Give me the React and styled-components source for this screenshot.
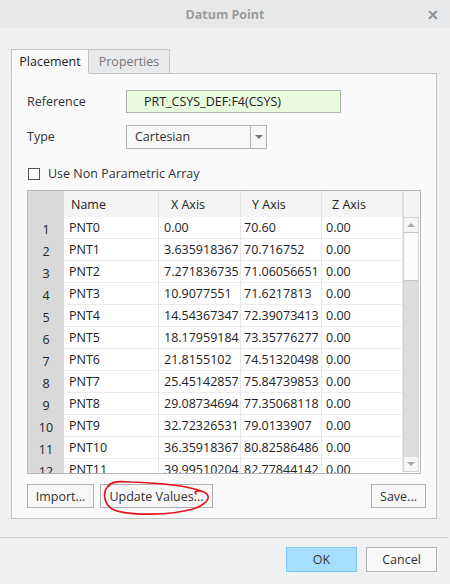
import React from 'react';
import styled, { createGlobalStyle } from 'styled-components';

const rows = [
  ['PNT0', '0.00', '70.60', '0.00'],
  ['PNT1', '3.635918367', '70.716752', '0.00'],
  ['PNT2', '7.271836735', '71.06056651', '0.00'],
  ['PNT3', '10.9077551', '71.6217813', '0.00'],
  ['PNT4', '14.54367347', '72.39073413', '0.00'],
  ['PNT5', '18.17959184', '73.35776277', '0.00'],
  ['PNT6', '21.8155102', '74.51320498', '0.00'],
  ['PNT7', '25.45142857', '75.84739853', '0.00'],
  ['PNT8', '29.08734694', '77.35068118', '0.00'],
  ['PNT9', '32.72326531', '79.0133907', '0.00'],
  ['PNT10', '36.35918367', '80.82586486', '0.00'],
  ['PNT11', '39.99510204', '82.77844142', '0.00'],
];

const GlobalStyle = createGlobalStyle`
  html, body {
    margin: 0;
    background: #eff0f2;
    font-family: "Open Sans", "Noto Sans", sans-serif;
    font-size: 12px;
    color: #333;
  }
`;

const Dialog = styled.div`
  width: 450px;
  height: 584px;
  display: flex;
  flex-direction: column;
  background: #eff0f2;
  overflow: hidden;
`;

const TitleBar = styled.div`
  height: 28px;
  background: #e7e8e9;
  display: flex;
  align-items: center;
  justify-content: center;
  position: relative;
  font-weight: bold;
  font-size: 12.5px;
  color: #9b9b9b;
`;

const Close = styled.span`
  position: absolute;
  right: 11px;
  top: 5px;
  font-size: 14px;
  color: #8e8e8e;
`;

const Body = styled.div`
  padding: 21px 13px 0 11px;
`;

const Tabs = styled.div`
  display: flex;
`;

const Tab = styled.div`
  height: 25px;
  box-sizing: border-box;
  width: ${p => p.$w}px;
  display: flex;
  align-items: center;
  justify-content: center;
  border: 1px solid #c4c4c4;
  border-bottom: ${p => (p.$active ? '1px solid #fafafa' : '1px solid #c4c4c4')};
  border-left: ${p => (p.$active ? '1px solid #c4c4c4' : 'none')};
  background: ${p => (p.$active ? '#fafafa' : '#e8e9ea')};
  color: ${p => (p.$active ? '#222' : '#777')};
  font-size: 12.5px;
  margin-bottom: -1px;
  position: relative;
  z-index: 1;
`;

const Panel = styled.div`
  border: 1px solid #c4c4c4;
  background: #fafafa;
  height: 446px;
  box-sizing: border-box;
  padding: 16px 15px 0 15px;
`;

const FieldRow = styled.div`
  display: flex;
  align-items: center;
  height: 23px;
  margin-bottom: ${p => p.$gap || 0}px;
`;

const Label = styled.div`
  width: 100px;
  font-size: 12.5px;
  color: #333;
`;

const RefBox = styled.div`
  width: 196px;
  height: 21px;
  border: 1px solid #b3b3b3;
  background: #e8fbdf;
  display: flex;
  align-items: center;
  padding-left: 17px;
  margin-left: -1px;
  font-size: 12.5px;
  color: #222;
`;

const Select = styled.div`
  width: 141px;
  height: 24px;
  border: 1px solid #b3b3b3;
  background: #f7f7f7;
  display: flex;
  margin-left: -1px;
  box-sizing: border-box;
`;

const SelectValue = styled.div`
  flex: 1;
  display: flex;
  align-items: center;
  padding-left: 8px;
  font-size: 12.5px;
  color: #333;
`;

const SelectArrow = styled.div`
  width: 15px;
  border-left: 1px solid #b3b3b3;
  display: flex;
  align-items: center;
  justify-content: center;
  &::after {
    content: '';
    border-left: 4px solid transparent;
    border-right: 4px solid transparent;
    border-top: 4px solid #777;
  }
`;

const CheckRow = styled.label`
  display: flex;
  align-items: center;
  gap: 8px;
  margin: 0 0 8px 1px;
  font-size: 12.5px;
  color: #333;
`;

const Checkbox = styled.span`
  width: 10px;
  height: 10px;
  border: 1px solid #555;
  background: #fff;
`;

const Table = styled.div`
  width: 394px;
  height: 284px;
  border: 1px solid #b5b5b5;
  box-sizing: border-box;
  display: grid;
  grid-template-columns: 375px 17px;
  grid-template-rows: 26px 1fr;
  overflow: hidden;
  background: #fff;
`;

const Grid = styled.div`
  display: grid;
  grid-template-columns: 36px 95px 82px 81px 81px;
  grid-auto-rows: 22px;
  grid-column: 1;
  grid-row: ${p => p.$row};
  align-content: start;
  overflow: hidden;
`;

const HeadCell = styled.div`
  background: #f4f4f4;
  border-right: 1px solid #e1e1e1;
  display: flex;
  align-items: center;
  padding-left: ${p => p.$pad || 0}px;
  font-size: 12.5px;
  color: #222;
  height: 26px;
  ${p => p.$corner && 'background: #d9d9d9; border-right: none;'}
`;

const NumCell = styled.div`
  background: #d9d9d9;
  display: flex;
  align-items: center;
  justify-content: center;
  padding-top: 2px;
  box-sizing: border-box;
  font-size: 12.5px;
  color: #222;
`;

const Cell = styled.div`
  border-right: 1px solid #e6e6e6;
  border-bottom: 1px solid #ececec;
  display: flex;
  align-items: center;
  padding-left: ${p => p.$pad}px;
  font-size: 12.5px;
  color: #222;
  white-space: nowrap;
  overflow: hidden;
`;

const HeadFill = styled.div`
  background: #f4f4f4;
  grid-column: 2;
  grid-row: 1;
  border-left: 1px solid #e1e1e1;
`;

const Scrollbar = styled.div`
  grid-column: 2;
  grid-row: 2;
  border: 1px solid #d4d4d4;
  background: #dcdcdc;
  display: flex;
  flex-direction: column;
  margin: 0 1px 1px 0;
`;

const ScrollBtn = styled.div`
  height: 14px;
  background: #f6f6f6;
  display: flex;
  align-items: center;
  justify-content: center;
  &::after {
    content: '';
    border-left: 4px solid transparent;
    border-right: 4px solid transparent;
    ${p => (p.$up ? 'border-bottom: 4px solid #a8a8a8;' : 'border-top: 4px solid #a8a8a8;')}
  }
`;

const Thumb = styled.div`
  height: 47px;
  background: #fbfbfb;
  border-top: 1px solid #c6c6c6;
  border-bottom: 1px solid #c6c6c6;
`;

const Track = styled.div`
  flex: 1;
`;

const ButtonRow = styled.div`
  display: flex;
  align-items: center;
  gap: 6px;
  margin-top: 10px;
  width: 399px;
  position: relative;
`;

const Button = styled.div`
  height: 24px;
  width: ${p => p.$w}px;
  border: 1px solid #b0b0b0;
  background: #f7f7f7;
  display: flex;
  align-items: center;
  justify-content: center;
  box-sizing: border-box;
  font-size: 12.5px;
  color: #333;
  margin-left: ${p => (p.$push ? 'auto' : '0')};
`;

const Scribble = styled.svg`
  position: absolute;
  left: 0;
  top: 0;
  overflow: visible;
  pointer-events: none;
`;

const Footer = styled.div`
  margin: 18px 2px 0 0;
  border-top: 1px solid #cbcbcb;
  display: flex;
  justify-content: flex-end;
  gap: 9px;
  padding: 9px 11px 0 0;
`;

const DialogButton = styled.div`
  width: 71px;
  height: 25px;
  box-sizing: border-box;
  border: 1px solid ${p => (p.$primary ? '#79c9f5' : '#b3b3b3')};
  background: ${p => (p.$primary ? '#a6defd' : '#f8f8f8')};
  display: flex;
  align-items: center;
  justify-content: center;
  font-size: 12.5px;
  color: #333;
`;

const pads = [5, 5, 3, 4];

export default function App() {
  return (
    <>
      <GlobalStyle />
      <Dialog>
        <TitleBar>
          Datum Point
          <Close>✕</Close>
        </TitleBar>
        <Body>
          <Tabs>
            <Tab $active $w={78}>Placement</Tab>
            <Tab $w={81}>Properties</Tab>
          </Tabs>
          <Panel>
            <FieldRow $gap={12}>
              <Label>Reference</Label>
              <RefBox>PRT_CSYS_DEF:F4(CSYS)</RefBox>
            </FieldRow>
            <FieldRow $gap={17}>
              <Label>Type</Label>
              <Select>
                <SelectValue>Cartesian</SelectValue>
                <SelectArrow />
              </Select>
            </FieldRow>
            <CheckRow>
              <Checkbox />
              Use Non Parametric Array
            </CheckRow>
            <Table>
              <Grid $row={1}>
                <HeadCell $corner />
                <HeadCell $pad={7}>Name</HeadCell>
                <HeadCell $pad={12}>X Axis</HeadCell>
                <HeadCell $pad={11}>Y Axis</HeadCell>
                <HeadCell $pad={10}>Z Axis</HeadCell>
              </Grid>
              <HeadFill />
              <Grid $row={2}>
                {rows.map((r, i) => (
                  <React.Fragment key={r[0]}>
                    <NumCell>{i + 1}</NumCell>
                    {r.map((v, j) => (
                      <Cell key={j} $pad={pads[j]}>{v}</Cell>
                    ))}
                  </React.Fragment>
                ))}
              </Grid>
              <Scrollbar>
                <ScrollBtn $up />
                <Thumb />
                <Track />
                <ScrollBtn />
              </Scrollbar>
            </Table>
            <ButtonRow>
              <Button $w={67}>Import...</Button>
              <Button $w={113}>Update Values...</Button>
              <Button $w={55} $push>Save...</Button>
              <Scribble width="1" height="1">
                <path
                  d="M 110 486 C 103 490, 102 503, 112 510 C 126 517, 172 517, 196 509 C 208 504, 212 497, 204 493 C 199 491, 193 492, 196 495 M 108 487 C 112 482, 120 482, 130 483 C 160 484, 185 486, 201 492"
                  transform="translate(-27 -485)"
                  fill="none"
                  stroke="#e8121a"
                  strokeWidth="1.6"
                  strokeLinecap="round"
                />
              </Scribble>
            </ButtonRow>
          </Panel>
        </Body>
        <Footer>
          <DialogButton $primary>OK</DialogButton>
          <DialogButton>Cancel</DialogButton>
        </Footer>
      </Dialog>
    </>
  );
}
